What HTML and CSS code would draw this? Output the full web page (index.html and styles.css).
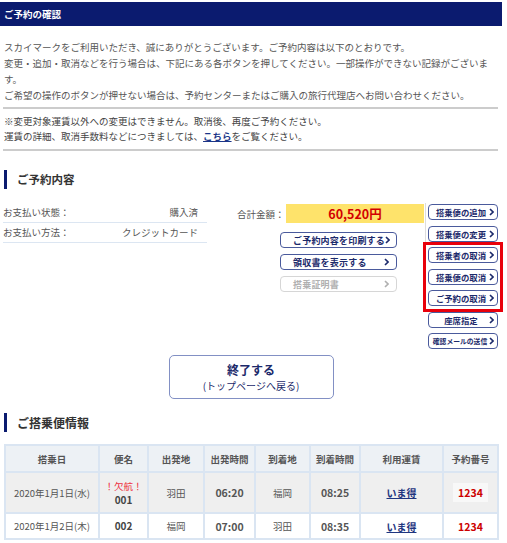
FILE: index.html
```html
<!DOCTYPE html>
<html lang="ja">
<head>
<meta charset="utf-8">
<title>ご予約の確認</title>
<link rel="stylesheet" href="styles.css">
</head>
<body>
<div class="page">
  <div class="titlebar">ご予約の確認</div>

  <div class="intro">
    <p>スカイマークをご利用いただき、誠にありがとうございます。ご予約内容は以下のとおりです。<br>変更・追加・取消などを行う場合は、下記にある各ボタンを押してください。一部操作ができない記録がございます。<br>ご希望の操作のボタンが押せない場合は、予約センターまたはご購入の旅行代理店へお問い合わせください。</p>
  </div>
  <div class="rule"></div>
  <div class="notes">
    <p>※変更対象運賃以外への変更はできません。取消後、再度ご予約ください。<br>運賃の詳細、取消手数料などにつきましては、<a class="link" href="#">こちら</a>をご覧ください。</p>
  </div>
  <div class="rule"></div>

  <h2 class="heading">ご予約内容</h2>

  <div class="summary">
    <div class="info">
      <div class="info-row"><span>お支払い状態：</span><span>購入済</span></div>
      <div class="info-row"><span>お支払い方法：</span><span>クレジットカード</span></div>
    </div>

    <div class="middle">
      <div class="total">
        <span class="total-label">合計金額：</span>
        <span class="total-box">60,520円</span>
      </div>
      <div class="docs">
        <a class="btn btn-doc" href="#"><span>ご予約内容を印刷する</span><svg class="chev" viewBox="0 0 5 8"><path d="M1 1l3 3-3 3"/></svg></a>
        <a class="btn btn-doc" href="#"><span>領収書を表示する</span><svg class="chev" viewBox="0 0 5 8"><path d="M1 1l3 3-3 3"/></svg></a>
        <a class="btn btn-doc btn-disabled" href="#"><span>搭乗証明書</span><svg class="chev" viewBox="0 0 5 8"><path d="M1 1l3 3-3 3"/></svg></a>
      </div>
    </div>

    <div class="actions">
      <a class="btn btn-act" href="#"><span class="lbl">搭乗便の追加</span><svg class="chev" viewBox="0 0 5 8"><path d="M1 1l3 3-3 3"/></svg></a>
      <a class="btn btn-act" href="#"><span class="lbl">搭乗便の変更</span><svg class="chev" viewBox="0 0 5 8"><path d="M1 1l3 3-3 3"/></svg></a>
      <a class="btn btn-act" href="#"><span class="lbl">搭乗者の取消</span><svg class="chev" viewBox="0 0 5 8"><path d="M1 1l3 3-3 3"/></svg></a>
      <a class="btn btn-act" href="#"><span class="lbl">搭乗便の取消</span><svg class="chev" viewBox="0 0 5 8"><path d="M1 1l3 3-3 3"/></svg></a>
      <a class="btn btn-act" href="#"><span class="lbl">ご予約の取消</span><svg class="chev" viewBox="0 0 5 8"><path d="M1 1l3 3-3 3"/></svg></a>
      <a class="btn btn-act" href="#"><span class="lbl">座席指定</span><svg class="chev" viewBox="0 0 5 8"><path d="M1 1l3 3-3 3"/></svg></a>
      <a class="btn btn-act btn-small" href="#"><span class="lbl">確認メールの送信</span><svg class="chev" viewBox="0 0 5 8"><path d="M1 1l3 3-3 3"/></svg></a>
      <div class="redbox"></div>
    </div>
  </div>

  <div class="finish">
    <a class="finish-btn" href="#"><span class="finish-main">終了する</span><span class="finish-sub">(トップページへ戻る)</span></a>
  </div>

  <h2 class="heading heading-flight">ご搭乗便情報</h2>

  <table class="flights">
    <colgroup>
      <col class="c-date"><col class="c-no"><col class="c-dep"><col class="c-dtime"><col class="c-arr"><col class="c-atime"><col class="c-fare"><col class="c-rsv">
    </colgroup>
    <thead>
      <tr><th>搭乗日</th><th>便名</th><th>出発地</th><th>出発時間</th><th>到着地</th><th>到着時間</th><th>利用運賃</th><th>予約番号</th></tr>
    </thead>
    <tbody>
      <tr class="row-cancel">
        <td>2020年1月1日(水)</td>
        <td><span class="cancel">！欠航！</span><span class="fno">001</span></td>
        <td>羽田</td>
        <td class="time">06:20</td>
        <td>福岡</td>
        <td class="time">08:25</td>
        <td><a class="fare" href="#">いま得</a></td>
        <td><span class="rsv rsv-box">1234</span></td>
      </tr>
      <tr class="row-normal">
        <td>2020年1月2日(木)</td>
        <td><span class="fno">002</span></td>
        <td>福岡</td>
        <td class="time">07:00</td>
        <td>羽田</td>
        <td class="time">08:35</td>
        <td><a class="fare" href="#">いま得</a></td>
        <td><span class="rsv">1234</span></td>
      </tr>
    </tbody>
  </table>
</div>
</body>
</html>
```

FILE: styles.css
```css
body {
  margin: 0;
  background: #fff;
  color: #555;
  font-family: "Noto Sans CJK JP", "Noto Sans", sans-serif;
}

p { margin: 0; }

.page {
  width: 502px;
  padding-top: 2px;
}

.titlebar {
  height: 24px;
  line-height: 24px;
  padding-left: 4px;
  background: #0b1b6f;
  color: #fff;
  font-size: 9.5px;
  font-weight: bold;
}

.intro {
  margin-top: 13px;
  padding: 0 4px;
  width: 490px;
  font-size: 9.5px;
  line-height: 16px;
  color: #555;
  margin-bottom: 4px;
}

.rule {
  height: 2px;
  margin: 0 4px 0 3px;
  background: #cccccc;
}

.notes {
  padding: 5px 4px 0;
  margin-bottom: 5px;
  font-size: 9.5px;
  line-height: 15px;
  color: #444;
}

.link {
  color: #1a3588;
  font-weight: bold;
  text-decoration: underline;
}

.heading {
  margin: 19px 0 0 4px;
  height: 19px;
  line-height: 19px;
  padding-left: 10px;
  border-left: 3px solid #0b1b6f;
  font-size: 11.5px;
  font-weight: bold;
  color: #333;
}

.summary {
  display: flex;
  align-items: flex-start;
  margin-top: 14px;
  padding-left: 3px;
}

.info {
  width: 204px;
  font-size: 9.5px;
  color: #555;
}

.info-row {
  display: flex;
  justify-content: space-between;
  height: 19px;
  line-height: 19px;
  padding-right: 9px;
  border-bottom: 1px solid #dce6f2;
}

.middle {
  width: 188px;
  margin-left: 30px;
  padding-bottom: 10px;
  border-right: 1px solid #dddddd;
}

.total {
  display: flex;
  align-items: center;
  margin-top: 1px;
  height: 19px;
}

.total-label {
  width: 49px;
  font-size: 9.5px;
  color: #555;
}

.total-box {
  width: 138px;
  height: 19px;
  line-height: 19px;
  background: #fee36b;
  color: #d20000;
  font-size: 12.5px;
  font-weight: bold;
  text-align: center;
}

.docs {
  display: flex;
  flex-direction: column;
  gap: 6px;
  width: 117px;
  margin: 9px 0 0 43px;
}

.btn {
  display: flex;
  align-items: center;
  justify-content: space-between;
  box-sizing: border-box;
  height: 16px;
  border: 1.5px solid #4a5a9c;
  border-radius: 4px;
  background: #fff;
  color: #1c2a6b;
  font-size: 9px;
  font-weight: bold;
  text-decoration: none;
  white-space: nowrap;
}

.chev {
  width: 5px;
  height: 8px;
  flex: none;
  fill: none;
  stroke: currentColor;
  stroke-width: 1.6;
}

.btn-doc {
  padding: 0 7px 0 12px;
  letter-spacing: 0.2px;
}

.btn-disabled {
  border-color: #d6d6d6;
  color: #b0b0b0;
}

.actions {
  position: relative;
  display: flex;
  flex-direction: column;
  gap: 5.5px;
  width: 70px;
  margin-left: 2px;
  padding-top: 1px;
}

.btn-act {
  padding: 0 3px 0 4px;
  font-size: 8.4px;
}

.btn-act .lbl {
  flex: 1;
  text-align: center;
}

.btn-small {
  padding-left: 2px;
  font-size: 6.8px;
}

.redbox {
  position: absolute;
  left: -5px;
  top: 39px;
  width: 80px;
  height: 70px;
  box-sizing: border-box;
  border: 3px solid #e8000b;
  pointer-events: none;
}

.finish {
  display: flex;
  justify-content: center;
  margin-top: 6px;
}

.finish-btn {
  display: flex;
  flex-direction: column;
  align-items: center;
  justify-content: center;
  box-sizing: border-box;
  width: 165px;
  height: 44px;
  border: 1.5px solid #8290c4;
  border-radius: 5px;
  color: #1c2a6b;
  text-decoration: none;
}

.finish-main {
  font-size: 12px;
  font-weight: bold;
  line-height: 16px;
}

.finish-sub {
  font-size: 10px;
  line-height: 15px;
}

.heading-flight {
  margin-top: 14px;
  font-size: 12px;
}

.flights {
  margin: 12px 0 0 4px;
  width: 493px;
  table-layout: fixed;
  border-collapse: collapse;
  font-size: 9.5px;
  color: #555;
}

.c-date { width: 94px; }
.c-no { width: 49px; }
.c-dep { width: 56px; }
.c-dtime { width: 51px; }
.c-arr { width: 55px; }
.c-atime { width: 50px; }
.c-fare { width: 83px; }
.c-rsv { width: 55px; }

.flights th,
.flights td {
  padding: 0;
  border: 2px solid #dae5f2;
  text-align: center;
}

.flights th {
  height: 25px;
  background: #edf1f5;
  font-weight: bold;
  color: #555;
}

.row-cancel td {
  height: 39px;
  background: #efefef;
}

.row-normal td {
  height: 24px;
  background: #fff;
}

.cancel {
  display: block;
  color: #ee3344;
  line-height: 14px;
}

.fno {
  display: block;
  font-size: 10px;
  font-weight: bold;
  color: #444;
  line-height: 14px;
}

.time {
  font-size: 10.5px;
  font-weight: bold;
}

.fare {
  color: #1f3680;
  font-size: 10px;
  font-weight: bold;
  text-decoration: underline;
}

.rsv {
  display: inline-block;
  padding: 2px 5px;
  color: #cc0000;
  font-size: 10.5px;
  font-weight: bold;
}

.rsv-box {
  background: #f8f8f8;
}
```
